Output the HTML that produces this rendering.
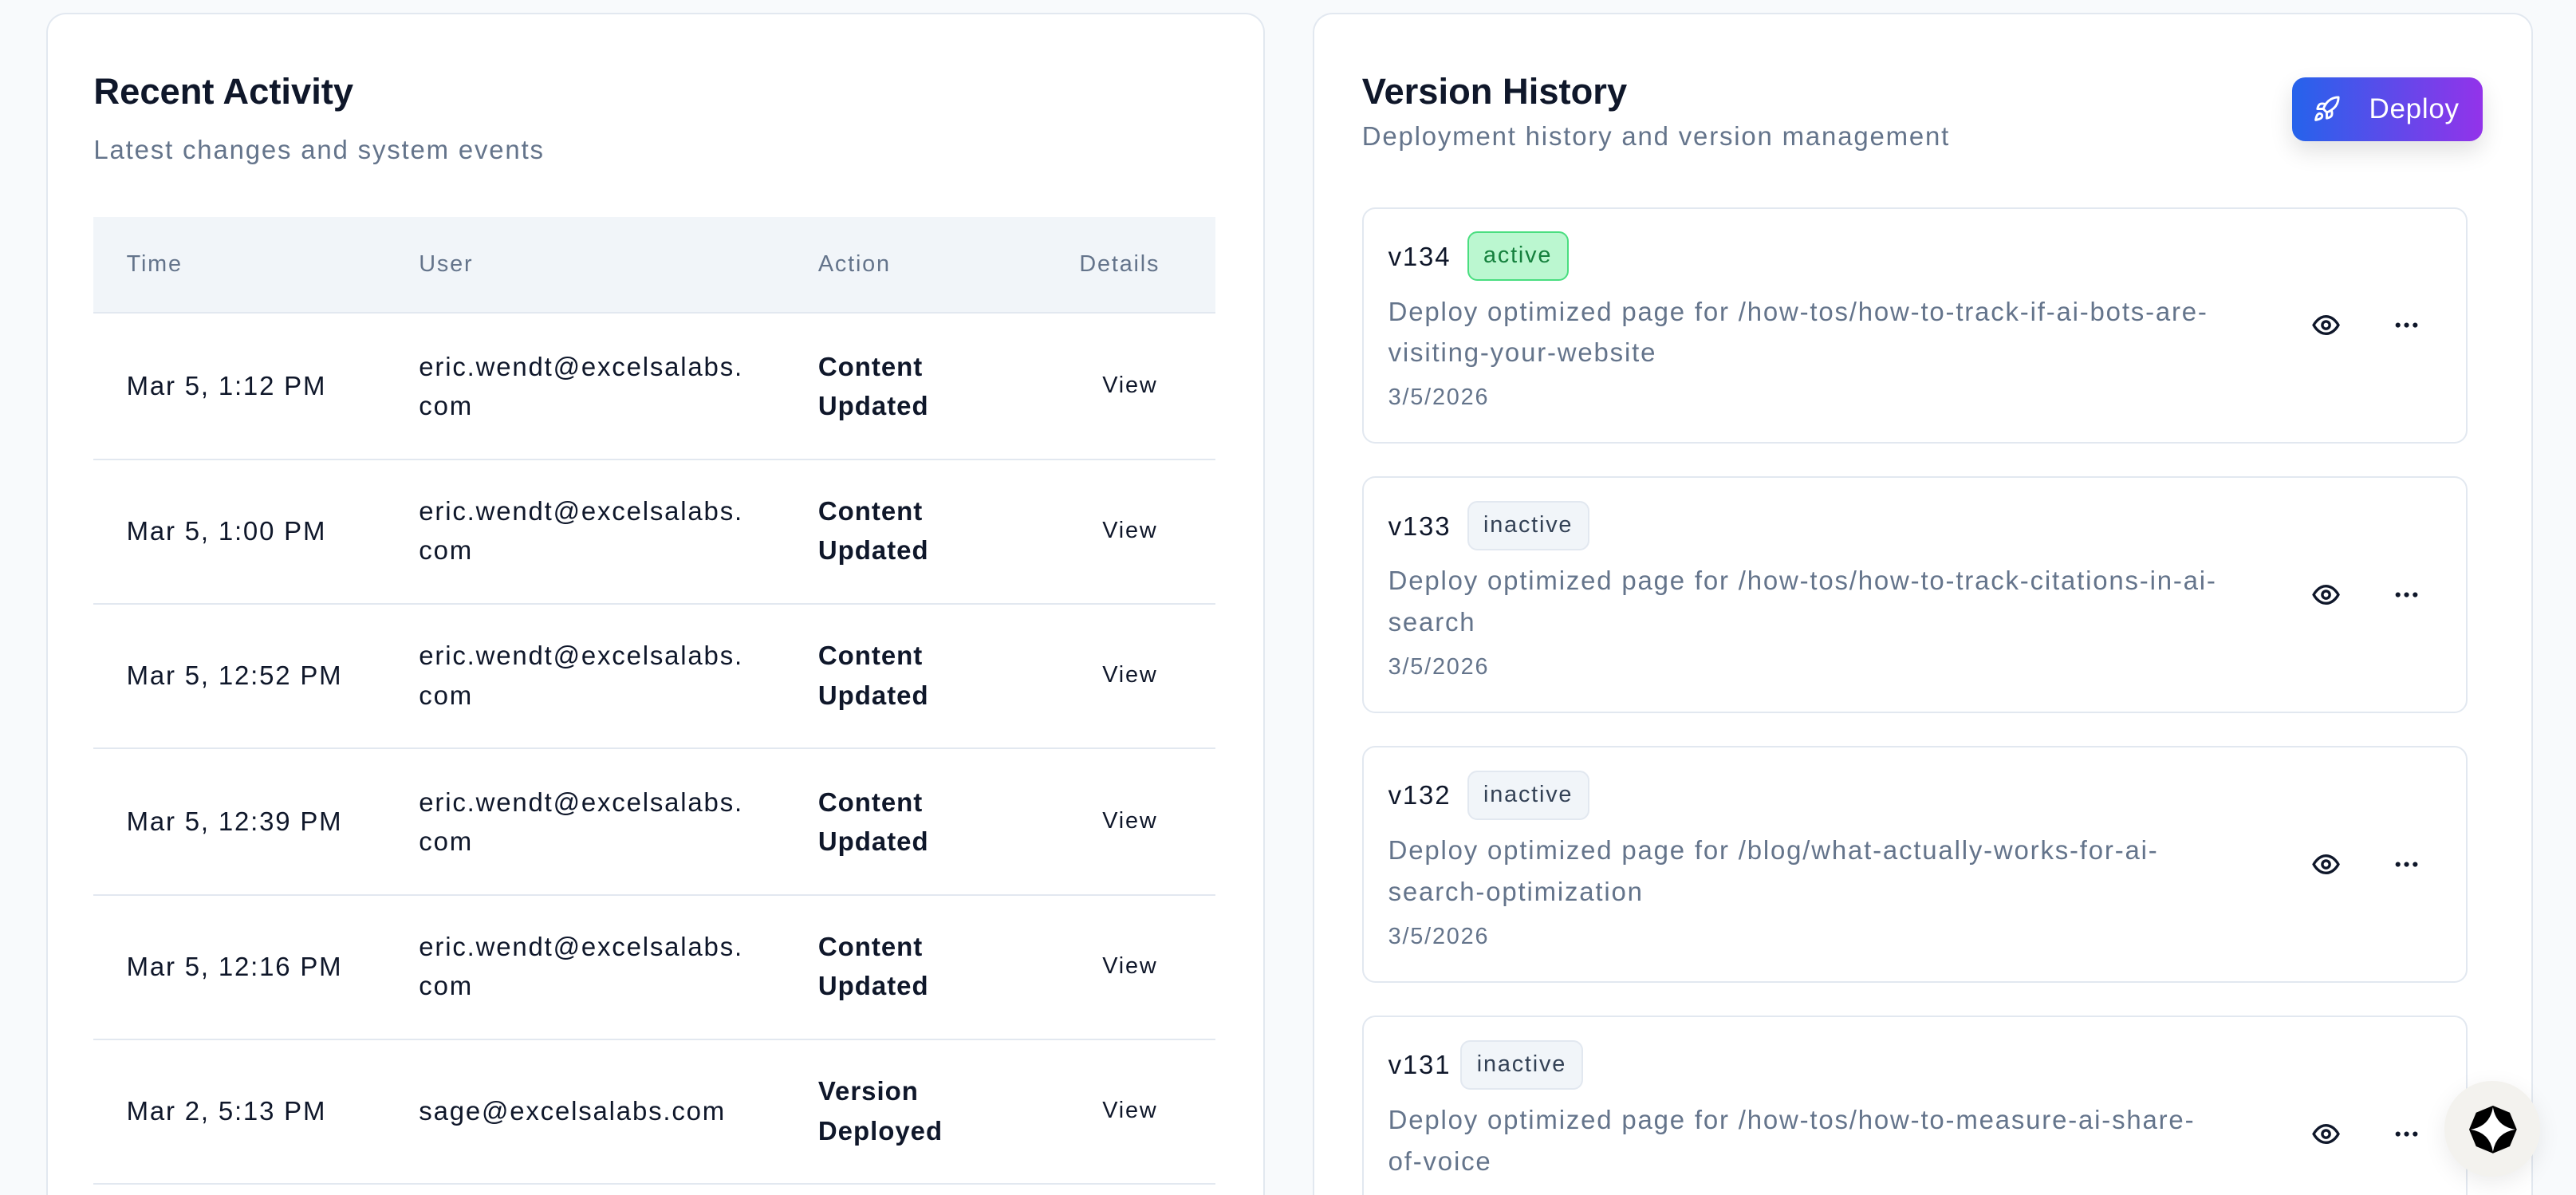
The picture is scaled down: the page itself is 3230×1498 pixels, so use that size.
<!DOCTYPE html>
<html style="overflow:hidden;height:727px"><head><meta charset="utf-8"><style>
html{zoom:2.06}
body{margin:0;width:1568px;height:727px;overflow:hidden;background:#f8fafc;font-family:"Liberation Sans",sans-serif;position:relative;color:#0f172a;letter-spacing:0.055em}
.card{position:absolute;background:#fff;border:1px solid #e2e8f0;border-bottom:none;border-radius:12px 12px 0 0}
h2{position:absolute;margin:0;font-size:22px;font-weight:600;color:#0f172a;letter-spacing:0}
.sub{position:absolute;font-size:16px;color:#64748b;white-space:nowrap}
.th{position:absolute;font-size:14px;color:#64748b}
.row{position:absolute;left:57px;width:683px;height:88px;border-bottom:1px solid #e2e8f0}
.row div{position:absolute;font-size:16px;line-height:24px;white-space:nowrap}
.row .a{font-weight:600;letter-spacing:0.03em}
.vc{position:absolute;left:829px;width:671px;height:142px;border:1px solid #e2e8f0;border-radius:8px;background:#fff}
.vc .v{position:absolute;left:15px;top:20px;font-size:16px}
.badge{position:absolute;top:14px;height:30px;line-height:28px;padding:0 9px;font-size:14px;border-radius:6px;background:#f1f5f9;border:1px solid #e2e8f0;color:#334155;box-sizing:border-box}
.vc .d{position:absolute;left:15px;top:50px;font-size:16px;line-height:25px;color:#64748b;white-space:nowrap}
.vc .dt{position:absolute;left:15px;top:107px;font-size:14px;color:#64748b}
.eye{position:absolute;left:577px;top:62px}
.dots{position:absolute;left:626px;top:62px}
</style></head><body>
<div class="card" style="left:28px;top:8px;width:740px;height:719px"></div>
<h2 style="left:57px;top:43px">Recent Activity</h2>
<div class="sub" style="left:57px;top:82px">Latest changes and system events</div>
<div style="position:absolute;left:57px;top:132px;width:683px;height:58px;background:#f1f5f9;border-bottom:1px solid #e2e8f0"></div>
<div class="th" style="left:77px;top:153px">Time</div>
<div class="th" style="left:255px;top:153px">User</div>
<div class="th" style="left:498px;top:153px">Action</div>
<div class="th" style="left:657px;top:153px">Details</div>

<div class="row" style="top:191px"><div style="left:20px;top:32px">Mar 5, 1:12 PM</div><div style="left:198px;top:20px">eric.wendt@excelsalabs.<br>com</div><div class="a" style="left:441px;top:20px">Content<br>Updated</div><div style="left:614px;top:32px;font-size:14px">View</div></div>
<div class="row" style="top:279px"><div style="left:20px;top:32px">Mar 5, 1:00 PM</div><div style="left:198px;top:20px">eric.wendt@excelsalabs.<br>com</div><div class="a" style="left:441px;top:20px">Content<br>Updated</div><div style="left:614px;top:32px;font-size:14px">View</div></div>
<div class="row" style="top:367px"><div style="left:20px;top:32px">Mar 5, 12:52 PM</div><div style="left:198px;top:20px">eric.wendt@excelsalabs.<br>com</div><div class="a" style="left:441px;top:20px">Content<br>Updated</div><div style="left:614px;top:32px;font-size:14px">View</div></div>
<div class="row" style="top:456px"><div style="left:20px;top:32px">Mar 5, 12:39 PM</div><div style="left:198px;top:20px">eric.wendt@excelsalabs.<br>com</div><div class="a" style="left:441px;top:20px">Content<br>Updated</div><div style="left:614px;top:32px;font-size:14px">View</div></div>
<div class="row" style="top:544px"><div style="left:20px;top:32px">Mar 5, 12:16 PM</div><div style="left:198px;top:20px">eric.wendt@excelsalabs.<br>com</div><div class="a" style="left:441px;top:20px">Content<br>Updated</div><div style="left:614px;top:32px;font-size:14px">View</div></div>
<div class="row" style="top:632px"><div style="left:20px;top:32px">Mar 2, 5:13 PM</div><div style="left:198px;top:32px">sage@excelsalabs.com</div><div class="a" style="left:441px;top:20px">Version<br>Deployed</div><div style="left:614px;top:32px;font-size:14px">View</div></div>

<div class="card" style="left:799px;top:8px;width:741px;height:719px"></div>
<h2 style="left:829px;top:43px">Version History</h2>
<div class="sub" style="left:829px;top:74px">Deployment history and version management</div>
<div style="position:absolute;left:1395px;top:47px;width:116px;height:39px;border-radius:8px;background:linear-gradient(90deg,#2563eb,#9333ea);box-shadow:0 6px 14px rgba(0,0,0,.12);color:#fff;font-size:17px">
<svg style="position:absolute;left:13px;top:11px" width="17" height="17" viewBox="0 0 24 24" fill="none" stroke="#fff" stroke-width="2" stroke-linecap="round" stroke-linejoin="round"><path d="M4.5 16.5c-1.5 1.26-2 5-2 5s3.740-.5 5-2c.71-.84.7-2.13-.09-2.910a2.180 2.180 0 0 0-2.910-.09z"/><path d="m12 15-3-3a22 22 0 0 1 2-3.95A12.880 12.880 0 0 1 22 2c0 2.720-.78 7.5-6 11a22.350 22.350 0 0 1-4 2z"/><path d="M9 12H4s.55-3.030 2-4c1.620-1.080 5 0 5 0"/><path d="M12 15v5s3.030-.55 4-2c1.080-1.620 0-5 0-5"/></svg>
<span style="position:absolute;left:47px;top:10px;letter-spacing:0.02em">Deploy</span></div>

<div class="vc" style="top:126px"><div class="v">v134</div><div class="badge" style="left:63px;background:#bbf7d0;border-color:#4ade80;color:#15803d">active</div><div class="d">Deploy optimized page for /how-tos/how-to-track-if-ai-bots-are-<br>visiting-your-website</div><div class="dt">3/5/2026</div>
<svg class="eye" width="18" height="18" viewBox="0 0 24 24" fill="none" stroke="#0f172a" stroke-width="2.2"><path d="M2 12s3.5-7 10-7 10 7 10 7-3.5 7-10 7S2 12 2 12z"/><circle cx="12" cy="12" r="3"/></svg><svg class="dots" width="18" height="18" viewBox="0 0 24 24" fill="#0f172a"><circle cx="5" cy="12" r="2"/><circle cx="12" cy="12" r="2"/><circle cx="19" cy="12" r="2"/></svg></div>
<div class="vc" style="top:290px"><div class="v">v133</div><div class="badge" style="left:63px">inactive</div><div class="d">Deploy optimized page for /how-tos/how-to-track-citations-in-ai-<br>search</div><div class="dt">3/5/2026</div>
<svg class="eye" width="18" height="18" viewBox="0 0 24 24" fill="none" stroke="#0f172a" stroke-width="2.2"><path d="M2 12s3.5-7 10-7 10 7 10 7-3.5 7-10 7S2 12 2 12z"/><circle cx="12" cy="12" r="3"/></svg><svg class="dots" width="18" height="18" viewBox="0 0 24 24" fill="#0f172a"><circle cx="5" cy="12" r="2"/><circle cx="12" cy="12" r="2"/><circle cx="19" cy="12" r="2"/></svg></div>
<div class="vc" style="top:454px"><div class="v">v132</div><div class="badge" style="left:63px">inactive</div><div class="d">Deploy optimized page for /blog/what-actually-works-for-ai-<br>search-optimization</div><div class="dt">3/5/2026</div>
<svg class="eye" width="18" height="18" viewBox="0 0 24 24" fill="none" stroke="#0f172a" stroke-width="2.2"><path d="M2 12s3.5-7 10-7 10 7 10 7-3.5 7-10 7S2 12 2 12z"/><circle cx="12" cy="12" r="3"/></svg><svg class="dots" width="18" height="18" viewBox="0 0 24 24" fill="#0f172a"><circle cx="5" cy="12" r="2"/><circle cx="12" cy="12" r="2"/><circle cx="19" cy="12" r="2"/></svg></div>
<div class="vc" style="top:618px;height:109px;border-bottom:none;border-radius:8px 8px 0 0"><div class="v">v131</div><div class="badge" style="left:59px">inactive</div><div class="d">Deploy optimized page for /how-tos/how-to-measure-ai-share-<br>of-voice</div>
<svg class="eye" width="18" height="18" viewBox="0 0 24 24" fill="none" stroke="#0f172a" stroke-width="2.2"><path d="M2 12s3.5-7 10-7 10 7 10 7-3.5 7-10 7S2 12 2 12z"/><circle cx="12" cy="12" r="3"/></svg><svg class="dots" width="18" height="18" viewBox="0 0 24 24" fill="#0f172a"><circle cx="5" cy="12" r="2"/><circle cx="12" cy="12" r="2"/><circle cx="19" cy="12" r="2"/></svg></div>

<div style="position:absolute;left:1488px;top:658px;width:58px;height:58px;border-radius:50%;background:#f3f2ee;box-shadow:0 4px 14px rgba(0,0,0,.08)">
<svg style="position:absolute;left:15px;top:15px" width="29" height="29" viewBox="0 0 30 30"><polygon points="15,0 25.6,4.4 30,15 25.6,25.6 15,30 4.4,25.6 0,15 4.4,4.4" fill="#000"/><path d="M15 1 Q17 13 29 15 Q17 17 15 29 Q13 17 1 15 Q13 13 15 1z" fill="#fff"/></svg></div>
</body></html>
